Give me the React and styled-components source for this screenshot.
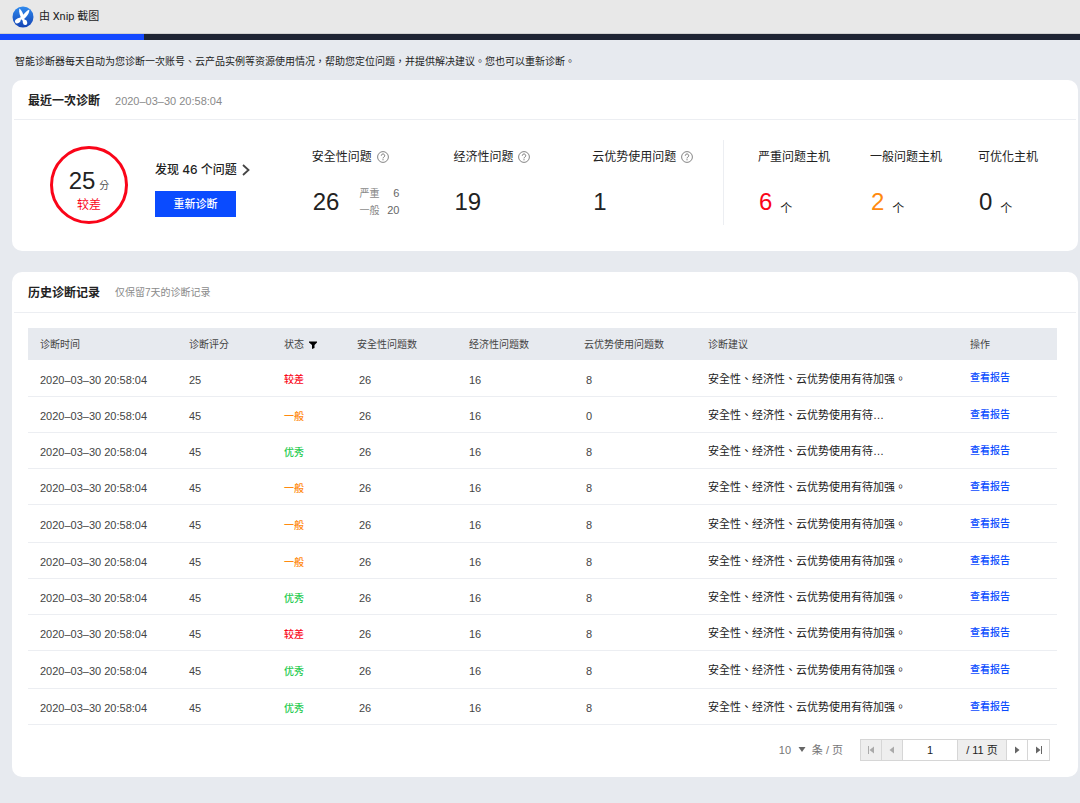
import React, { useState } from 'react';
import styled, { createGlobalStyle } from 'styled-components';

const COLORS = {
    blue: '#0a4bff',
    red: '#fa0519',
    orange: '#ff8a0f',
    green: '#1fcb50',
};

const STATUS = {
    bad: { label: '较差', color: COLORS.red },
    normal: { label: '一般', color: COLORS.orange },
    good: { label: '优秀', color: COLORS.green },
};

const TIME = '2020–03–30 20:58:04';
const ADVICE = '安全性、经济性、云优势使用有待加强。';
const ADVICE_CUT = '安全性、经济性、云优势使用有待…';

const records = [
    { score: 25, status: 'bad', cloud: 8, advice: ADVICE },
    { score: 45, status: 'normal', cloud: 0, advice: ADVICE_CUT },
    { score: 45, status: 'good', cloud: 8, advice: ADVICE_CUT },
    { score: 45, status: 'normal', cloud: 8, advice: ADVICE },
    { score: 45, status: 'normal', cloud: 8, advice: ADVICE },
    { score: 45, status: 'normal', cloud: 8, advice: ADVICE },
    { score: 45, status: 'good', cloud: 8, advice: ADVICE },
    { score: 45, status: 'bad', cloud: 8, advice: ADVICE },
    { score: 45, status: 'good', cloud: 8, advice: ADVICE },
    { score: 45, status: 'good', cloud: 8, advice: ADVICE },
];

const hosts = [
    { label: '严重问题主机', value: 6, color: COLORS.red },
    { label: '一般问题主机', value: 2, color: COLORS.orange },
    { label: '可优化主机', value: 0, color: '#222' },
];

const Logo = () => (
    <svg width="22" height="22" viewBox="0 0 22 22" aria-hidden="true">
        <defs>
            <linearGradient id="logo" x1="0" y1="0" x2="0" y2="1">
                <stop offset="0" stopColor="#2f8aee" />
                <stop offset="1" stopColor="#1443b4" />
            </linearGradient>
        </defs>
        <circle cx="11" cy="11" r="10.5" fill="url(#logo)" />
        <g fill="#fff">
            <path d="M7.300 2.600c1.900 1.200 3.800 4.600 4.900 8.600l-2 2C8 10.600 6.600 6.400 7.300 2.600z" />
            <path d="M17.300 3.600c.5 2.900-2.200 7-5.600 9.700l-1.900-1.900c1.600-3.400 4.600-6.400 7.500-7.800z" />
            <path d="M5 13l5-2.600 3.800 4.600-2.200 1.200-1.800-2.800-3.200 1z" />
            <ellipse cx="5.800" cy="14.800" rx="3" ry="2.200" transform="rotate(-32 5.800 14.800)" />
            <ellipse cx="13" cy="16.400" rx="2.200" ry="2.700" transform="rotate(-12 13 16.400)" />
        </g>
    </svg>
);

const HelpIcon = () => (
    <svg width="12" height="12" viewBox="0 0 12 12" fill="none" stroke="#777" aria-hidden="true">
        <circle cx="6" cy="6" r="5.400" strokeWidth="0.900" />
        <path d="M4.300 4.700a1.700 1.700 0 1 1 2.600 1.400c-.6.400-.9.600-.9 1.300" />
        <path d="M6 8.200v1.100" />
    </svg>
);

const Stat = ({ label, value, children }) => (
    <div>
        <StatLabel>
            {label}
            <HelpIcon />
        </StatLabel>
        <StatValue>
            <Big>{value}</Big>
            {children}
        </StatValue>
    </div>
);

const App = () => {
    const [page, setPage] = useState(1);
    const [size, setSize] = useState('10');

    return (
        <>
            <GlobalStyle />
            <TitleBar>
                <Logo />
                <span>由 Xnip 截图</span>
            </TitleBar>
            <NavStrip />
            <main>
                <Intro>
                    智能诊断器每天自动为您诊断一次账号、云产品实例等资源使用情况，帮助您定位问题，并提供解决建议。您也可以重新诊断。
                </Intro>

                <Card>
                    <CardHeader $height={40}>
                        <h2>最近一次诊断</h2>
                        <Muted $size={11}>{TIME}</Muted>
                    </CardHeader>
                    <Summary>
                        <Issues>
                            <ScoreRing>
                                <Score>
                                    <Big>25</Big>
                                    <small>分</small>
                                </Score>
                                <ScoreLevel>较差</ScoreLevel>
                            </ScoreRing>
                            <Action>
                                <Found href="#issues">
                                    发现 46 个问题
                                    <svg width="8" height="12" viewBox="0 0 8 12" fill="none" stroke="#444" strokeWidth="1.800">
                                        <path d="M1 1l5.500 5L1 11" />
                                    </svg>
                                </Found>
                                <PrimaryButton type="button">重新诊断</PrimaryButton>
                            </Action>
                            <Stat label="安全性问题" value={26}>
                                <Detail>
                                    <dt>严重</dt>
                                    <dd>6</dd>
                                    <dt>一般</dt>
                                    <dd>20</dd>
                                </Detail>
                            </Stat>
                            <Stat label="经济性问题" value={19} />
                            <Stat label="云优势使用问题" value={1} />
                        </Issues>
                        <Hosts>
                            {hosts.map(host => (
                                <div key={host.label}>
                                    <StatLabel>{host.label}</StatLabel>
                                    <HostValue>
                                        <Big $color={host.color}>{host.value}</Big>
                                        <span>个</span>
                                    </HostValue>
                                </div>
                            ))}
                        </Hosts>
                    </Summary>
                </Card>

                <Card>
                    <CardHeader $height={41}>
                        <h2>历史诊断记录</h2>
                        <Muted $size={10}>仅保留7天的诊断记录</Muted>
                    </CardHeader>
                    <History>
                        <Table>
                            <colgroup>
                                <Col $width={149} />
                                <Col $width={95} />
                                <Col $width={73} />
                                <Col $width={112} />
                                <Col $width={115} />
                                <Col $width={124} />
                                <col />
                                <Col $width={99} />
                            </colgroup>
                            <thead>
                                <tr>
                                    <Th>诊断时间</Th>
                                    <Th>诊断评分</Th>
                                    <Th>
                                        状态
                                        <FilterButton type="button" aria-label="筛选状态">
                                            <svg width="8" height="8" viewBox="0 0 8 8">
                                                <path d="M0 0.500h8v1L5.500 4v3L3 8V4L0 1.500z" fill="#000" />
                                            </svg>
                                        </FilterButton>
                                    </Th>
                                    <Th>安全性问题数</Th>
                                    <Th>经济性问题数</Th>
                                    <Th>云优势使用问题数</Th>
                                    <Th>诊断建议</Th>
                                    <Th>操作</Th>
                                </tr>
                            </thead>
                            <tbody>
                                {records.map((record, index) => (
                                    <Row key={index}>
                                        <Td>{TIME}</Td>
                                        <Td>{record.score}</Td>
                                        <Td><Status $color={STATUS[record.status].color}>{STATUS[record.status].label}</Status></Td>
                                        <Td $indent={14}>26</Td>
                                        <Td>16</Td>
                                        <Td $indent={14}>{record.cloud}</Td>
                                        <AdviceTd>{record.advice}</AdviceTd>
                                        <LinkTd><a href="#report">查看报告</a></LinkTd>
                                    </Row>
                                ))}
                            </tbody>
                        </Table>

                        <Pager>
                            <SizePicker>
                                <select value={size} onChange={e => setSize(e.target.value)}>
                                    <option>10</option>
                                    <option>20</option>
                                    <option>50</option>
                                </select>
                                <svg width="8" height="5" viewBox="0 0 8 5">
                                    <path d="M0.500 0h7L4 5z" fill="#666" />
                                </svg>
                                <span>条 / 页</span>
                            </SizePicker>
                            <PageGroup>
                                <PageButton type="button" disabled={page === 1} onClick={() => setPage(1)} aria-label="首页">
                                    <svg width="8" height="8" viewBox="0 0 8 8">
                                        <path d="M1 0h1v8H1zM7 0.500v7L2.500 4z" />
                                    </svg>
                                </PageButton>
                                <PageButton type="button" disabled={page === 1} onClick={() => setPage(page - 1)} aria-label="上一页">
                                    <svg width="8" height="8" viewBox="0 0 8 8">
                                        <path d="M6 0.500v7L1.500 4z" />
                                    </svg>
                                </PageButton>
                                <PageInput
                                    aria-label="页码"
                                    type="text"
                                    value={page}
                                    onChange={e => setPage(Number(e.target.value) || 1)}
                                />
                                <PageTotal>/ 11 页</PageTotal>
                                <PageButton type="button" onClick={() => setPage(page + 1)} aria-label="下一页">
                                    <svg width="8" height="8" viewBox="0 0 8 8">
                                        <path d="M2 0.500v7L6.500 4z" />
                                    </svg>
                                </PageButton>
                                <PageButton type="button" onClick={() => setPage(11)} aria-label="末页">
                                    <svg width="8" height="8" viewBox="0 0 8 8">
                                        <path d="M6 0h1v8H6zM1 0.500v7L5.500 4z" />
                                    </svg>
                                </PageButton>
                            </PageGroup>
                        </Pager>
                    </History>
                </Card>
            </main>
        </>
    );
};

const GlobalStyle = createGlobalStyle`
  * { box-sizing: border-box; }

  body {
    margin: 0;
    background: #e7eaef;
    color: #222;
    font-family: "Liberation Sans", "Noto Sans CJK TC", sans-serif;
    font-size: 12px;
    line-height: 16px;
  }

  button, input, select { font: inherit; color: inherit; }
  a { text-decoration: none; color: inherit; }
  svg { flex: none; }
`;

const TitleBar = styled.header`
  display: flex;
  align-items: center;
  gap: 5px;
  height: 34px;
  padding: 0 12px;
  background: #e8e8e8;
  border-bottom: 1px solid #d0d0d0;
  font-family: Roboto, "Noto Sans CJK TC", sans-serif;
  font-size: 11px;
`;

const NavStrip = styled.div`
  height: 6px;
  background: linear-gradient(90deg, #1449ff 144px, #1e2433 144px);
`;

const Intro = styled.p`
  margin: 0;
  padding: 14px 15px 10px;
  font-size: 10px;
`;

const Card = styled.section`
  margin: 0 2px 21px 12px;
  background: #fff;
  border-radius: 10px;
`;

const CardHeader = styled.div`
  display: flex;
  align-items: center;
  gap: 15px;
  height: ${({ $height }) => $height}px;
  margin: 0 2px;
  padding: 2px 14px 0;
  border-bottom: 1px solid #eceef2;

  h2 {
    margin: 0;
    font-size: 12px;
    font-weight: 700;
  }
`;

const Muted = styled.span`
  color: #8a8a8a;
  font-size: ${({ $size }) => $size}px;
`;

const Summary = styled.div`
  display: grid;
  grid-template-columns: 712fr 354fr;
  padding: 20px 0 26px;
`;

const Issues = styled.div`
  display: grid;
  grid-template-columns: 105px 157fr 142fr 139fr 131fr;
  height: 85px;
  padding-left: 38px;
  border-right: 1px solid #eceef2;
`;

const ScoreRing = styled.div`
  display: flex;
  flex-direction: column;
  align-items: center;
  gap: 2px;
  width: 78px;
  height: 78px;
  margin-top: 6px;
  padding-top: 18px;
  border: 3px solid ${COLORS.red};
  border-radius: 50%;
`;

const Score = styled.div`
  display: flex;
  align-items: baseline;
  gap: 4px;

  small { font-size: 10px; color: #555; }
`;

const ScoreLevel = styled.div`
  color: ${COLORS.red};
`;

const Big = styled.span`
  color: ${({ $color }) => $color || '#222'};
  font-size: 24px;
  line-height: 28px;
`;

const Action = styled.div`
  display: flex;
  flex-direction: column;
  align-items: flex-start;
  gap: 13px;
  padding-top: 22px;
`;

const Found = styled.a`
  display: flex;
  align-items: center;
  gap: 5px;
  font-family: Inter, "Noto Sans CJK TC", sans-serif;
  font-weight: 500;
`;

const PrimaryButton = styled.button`
  width: 81px;
  height: 26px;
  padding: 0;
  border: none;
  background: ${COLORS.blue};
  color: #fff;
  font-size: 11px;
  font-weight: 500;
  cursor: pointer;
`;

const StatLabel = styled.div`
  display: flex;
  align-items: center;
  gap: 5px;
  padding-top: 9px;
`;

const StatValue = styled.div`
  display: flex;
  align-items: center;
  gap: 20px;
  height: 34px;
  margin-top: 20px;
  padding-left: 1px;
`;

const Detail = styled.dl`
  display: grid;
  grid-template-columns: 20px 20px;
  margin: 0;
  color: #888;
  font-size: 10px;
  line-height: 17px;

  dd {
    margin: 0;
    text-align: right;
    color: #666;
    font-size: 11px;
  }
`;

const Hosts = styled.div`
  display: grid;
  grid-template-columns: 112fr 108fr 100fr;
  padding-left: 34px;
`;

const HostValue = styled.div`
  display: flex;
  align-items: flex-end;
  gap: 8px;
  height: 30px;
  margin-top: 22px;
  padding-left: 1px;

  ${Big} { line-height: 30px; }
`;

const History = styled.div`
  padding: 15px 21px 16px 16px;
`;

const Table = styled.table`
  width: 100%;
  table-layout: fixed;
  border-collapse: collapse;
`;

const Col = styled.col`
  width: ${({ $width }) => $width}px;
`;

const Th = styled.th`
  height: 32px;
  padding: 2px 0 0 12px;
  background: #e7eaef;
  color: #444;
  font-size: 10px;
  font-weight: 400;
  text-align: left;
  white-space: nowrap;
`;

const Row = styled.tr`
  height: 36px;
  border-bottom: 1px solid #eceef2;

  &:nth-child(4n + 5) { height: 38px; }
`;

const Td = styled.td`
  padding: 4px 0 0 ${({ $indent }) => $indent || 12}px;
  color: #444;
  font-size: 11px;
  white-space: nowrap;
`;

const AdviceTd = styled(Td)`
  padding-top: 2px;
  color: #222;
`;

const LinkTd = styled(Td)`
  padding-top: 0;

  a {
    color: ${COLORS.blue};
    font-size: 10px;
    font-weight: 500;
  }
`;

const Status = styled.span`
  color: ${({ $color }) => $color};
  font-size: 10px;
  font-weight: 500;
`;

const FilterButton = styled.button`
  margin: 0 0 0 5px;
  padding: 0;
  border: none;
  background: none;
  line-height: 8px;
  vertical-align: middle;
  cursor: pointer;
`;

const Pager = styled.div`
  display: flex;
  align-items: center;
  justify-content: flex-end;
  gap: 17px;
  margin-top: 14px;
  padding-right: 7px;
`;

const SizePicker = styled.label`
  display: flex;
  align-items: center;
  gap: 6px;
  color: #777;
  font-size: 11px;

  select {
    padding: 0;
    border: none;
    background: none;
    appearance: none;
  }
`;

const PageGroup = styled.div`
  display: flex;
  height: 22px;
  border: 1px solid #d6d6d6;
`;

const PageButton = styled.button`
  display: flex;
  align-items: center;
  justify-content: center;
  width: 21px;
  padding: 0;
  border: none;
  border-right: 1px solid #d6d6d6;
  background: #fff;
  cursor: pointer;

  svg { fill: #666; }

  &:disabled {
    background: #eee;
    cursor: default;
    svg { fill: #aaa; }
  }

  &:last-child { border-right: none; }
`;

const PageInput = styled.input`
  width: 54px;
  padding: 0;
  border: none;
  text-align: center;
  font-size: 11px;
`;

const PageTotal = styled.span`
  width: 50px;
  border: solid #d6d6d6;
  border-width: 0 1px;
  background: #eee;
  font-size: 11px;
  line-height: 20px;
  text-align: center;
`;

export default App;
